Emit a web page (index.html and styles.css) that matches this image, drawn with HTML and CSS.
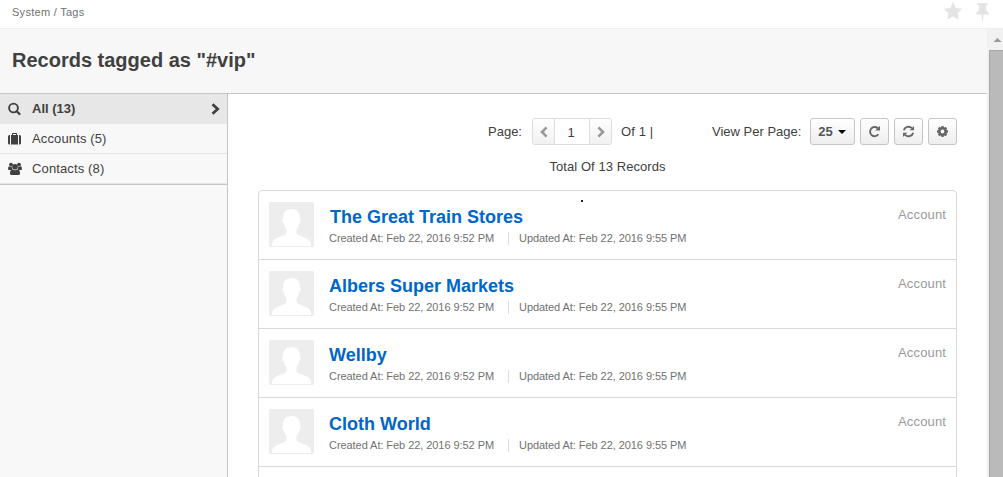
FILE: index.html
```html
<!DOCTYPE html>
<html lang="en">
<head>
<meta charset="utf-8">
<title>Tags</title>
<link rel="stylesheet" href="styles.css">
</head>
<body>
<svg class="defs" width="0" height="0">
  <symbol id="avatar" viewBox="0 0 45 45">
    <rect width="45" height="45" rx="2" fill="#ededed"/>
    <path d="M22.500 7C17 7 13.600 10.300 14.100 16.500c-1.300.5-.9 3.900.7 4.700.4 2.500 1.300 4.500 2.700 6V31C16.500 34.500 5 34.500 3 41v3h39v-3C40 34.500 28.500 34.500 27.500 31v-3.800c1.400-1.500 2.300-3.500 2.700-6 1.600-.8 2-4.200.7-4.700C31.400 10.300 28 7 22.500 7z" fill="#fff"/>
  </symbol>
</svg>
<header class="topbar">
  <nav class="crumbs">System / Tags</nav>
  <div class="topicons">
    <svg width="20" height="19" viewBox="0 0 20 19"><path d="M10 0l2.800 5.900 6.400.8-4.600 4.500 1.200 6.300L10 14.500l-5.800 3 1.200-6.300L.8 6.700l6.400-.8z" fill="#e4e4e4"/></svg>
    <svg width="13" height="19" viewBox="0 0 13 19"><path d="M2 1h9q.8 0 .8 1t-.8 1h-.8v5.500c1.700.8 2.600 2.200 2.600 4H7.500l-.5 6H6l-.5-6H.2c0-1.800.9-3.200 2.600-4V3H2q-.8 0-.8-1T2 1z" fill="#e4e4e4"/></svg>
  </div>
</header>
<div class="below">
  <div class="page">
    <div class="title"><h1>Records tagged as "#vip"</h1></div>
    <div class="columns">
      <aside class="side">
        <ul class="filters">
          <li class="active"><svg width="16" height="14" viewBox="0 0 16 14"><circle cx="5.500" cy="6" r="4.400" fill="none" stroke="#404040" stroke-width="1.900"/><path d="M8.700 9.200l2.800 2.800" stroke="#404040" stroke-width="2.300" stroke-linecap="round"/></svg><span>All (13)</span><svg class="arrow" width="9" height="12" viewBox="0 0 9 12"><path d="M1.500 1.200L6.700 6l-5.200 4.800" fill="none" stroke="#404040" stroke-width="2.700"/></svg></li>
          <li><svg width="16" height="14" viewBox="0 0 16 14"><path d="M0 4.500Q0 3 1.500 3H2v9.500h-.5Q0 12.500 0 11zM11 3h.5Q13 3 13 4.500V11q0 1.500-1.500 1.500H11zM3 3h1V1.800Q4 1 4.800 1h3.400Q9 1 9 1.800V3h1v9.500H3zM5 2v1h3V2z" fill="#404040" fill-rule="evenodd"/></svg><span>Accounts (5)</span></li>
          <li><svg width="16" height="14" viewBox="0 0 16 14"><g fill="#404040"><circle cx="3" cy="2.700" r="1.900"/><circle cx="11" cy="2.700" r="1.900"/><circle cx="7" cy="4.700" r="2.800"/><path d="M0 7.200Q0 4.300 1.200 4.300q1.700 1 2.600.4 0 1.500.9 2.500Q3.500 7 2.800 8H1Q0 8 0 7.200zM14 7.200q0-2.900-1.200-2.900-1.700 1-2.600.4 0 1.500-.9 2.500 1.200-.2 1.900.8H13q1 0 1-.8zM2 11.500q0-4 2.300-4.200Q7 9 9.700 7.300 12 7.500 12 11.500 12 13 10.500 13h-7Q2 13 2 11.500z"/></g></svg><span>Contacts (8)</span></li>
        </ul>
      </aside>
      <main class="content">
        <div class="controls">
          <span class="lbl">Page:</span>
          <div class="pager">
            <button><svg width="8" height="12" viewBox="0 0 8 12"><path d="M6.600 1.300L2 6l4.600 4.700" fill="none" stroke="#999" stroke-width="2.600"/></svg></button>
            <span class="num">1</span>
            <button><svg width="8" height="12" viewBox="0 0 8 12"><path d="M1.400 1.300L6 6l-4.600 4.700" fill="none" stroke="#999" stroke-width="2.600"/></svg></button>
          </div>
          <span class="of">Of 1 |</span>
          <span class="view">View Per Page:</span>
          <button class="btn size"><span>25</span><i class="caret"></i></button>
          <button class="btn"><svg width="13" height="13" viewBox="0 0 13 13"><path d="M10.400 9.300A4.600 4.600 0 1 1 9.800 3.200" fill="none" stroke="#666" stroke-width="1.900"/><path d="M12 .8v4.700H7.300z" fill="#666"/></svg></button>
          <button class="btn"><svg width="13" height="13" viewBox="0 0 13 13"><path d="M1.800 5.300A4.800 4.800 0 0 1 9.900 3.200M11.200 7.700a4.800 4.800 0 0 1-8.100 2.100" fill="none" stroke="#666" stroke-width="1.900"/><path d="M12 1v4.300H7.700zM1 12V7.700h4.300z" fill="#666"/></svg></button>
          <button class="btn"><svg width="13" height="13" viewBox="0 0 13 13"><g fill="none" stroke="#666"><circle cx="6.500" cy="6.500" r="3.200" stroke-width="2.600"/><path d="M6.500 1v2M6.500 10v2M1 6.500h2M10 6.500h2M2.600 2.600L4 4M9 9l1.400 1.400M2.600 10.400L4 9M9 4l1.400-1.400" stroke-width="2.300"/></g></svg></button>
        </div>
        <div class="total">Total Of 13 Records</div>
        <div class="list">
          <span class="dot"></span>
          <article class="row"><svg class="avatar"><use href="#avatar"/></svg><div class="info"><h2 class="first">The Great Train Stores</h2><p><span class="created">Created At: Feb 22, 2016 9:52 PM</span><span>Updated At: Feb 22, 2016 9:55 PM</span></p></div><span class="kind">Account</span></article>
          <article class="row"><svg class="avatar"><use href="#avatar"/></svg><div class="info"><h2>Albers Super Markets</h2><p><span class="created">Created At: Feb 22, 2016 9:52 PM</span><span>Updated At: Feb 22, 2016 9:55 PM</span></p></div><span class="kind">Account</span></article>
          <article class="row"><svg class="avatar"><use href="#avatar"/></svg><div class="info"><h2>Wellby</h2><p><span class="created">Created At: Feb 22, 2016 9:52 PM</span><span>Updated At: Feb 22, 2016 9:55 PM</span></p></div><span class="kind">Account</span></article>
          <article class="row"><svg class="avatar"><use href="#avatar"/></svg><div class="info"><h2>Cloth World</h2><p><span class="created">Created At: Feb 22, 2016 9:52 PM</span><span>Updated At: Feb 22, 2016 9:55 PM</span></p></div><span class="kind">Account</span></article>
        </div>
      </main>
    </div>
  </div>
  <div class="scroll"><svg width="16" height="21" viewBox="0 0 16 21"><path d="M4.500 13L8.500 9l4 4z" fill="#999"/></svg><div class="thumb"></div></div>
</div>
</body>
</html>
```
FILE: styles.css
```css
* { box-sizing: border-box; }
body { margin: 0; height: 477px; overflow: hidden; background: #fff; color: #404040; font: 13px/20px "Liberation Sans", Arial, sans-serif; display: flex; flex-direction: column; }
svg { display: block; flex: none; }
.defs { position: absolute; }
h1, h2, p, ul { margin: 0; padding: 0; }
button { margin: 0; padding: 0; font: inherit; color: inherit; }
.topbar { height: 29px; flex: none; border-bottom: 1px solid #eee; display: flex; justify-content: space-between; padding: 0 14px 0 12px; }
.crumbs { font-size: 11px; line-height: 25px; color: #717171; letter-spacing: .28px; }
.topicons { display: flex; gap: 13px; padding-top: 2px; }
.below { flex: 1; min-height: 0; display: flex; }
.page { width: 987px; flex: none; display: flex; flex-direction: column; }
.title { height: 65px; flex: none; background: #f7f7f7; border-bottom: 1px solid #c5c5c5; padding: 17px 12px 0; }
.title h1 { font-size: 20px; line-height: 28px; font-weight: bold; }
.columns { flex: 1; min-height: 0; display: flex; }
.side { width: 228px; flex: none; background: #f8f8f8; border-right: 1px solid #c5c5c5; }
.filters { list-style: none; border-bottom: 1px solid #c5c5c5; height: 91px; }
.filters li { height: 30px; display: flex; align-items: center; gap: 8px; padding: 0 8px; border-bottom: 1px solid #e5e5e5; letter-spacing: .13px; }
.filters .active { background: #e7e7e7; font-weight: bold; letter-spacing: 0; }
.arrow { margin-left: auto; margin-right: -1px; }
.content { flex: 1; padding: 24px 30px 0; overflow: hidden; }
.controls { height: 27px; display: flex; align-items: center; padding-left: 230px; white-space: nowrap; }
.lbl { width: 44px; }
.lbl, .of, .view { line-height: 28px; padding-top: 1px; }
.pager { width: 80px; height: 27px; display: flex; border: 1px solid #ddd; border-radius: 3px; overflow: hidden; background: #f7f7f7; }
.pager button { width: 21px; border: 0; background: linear-gradient(#fff, #f1f1f1); display: flex; align-items: center; justify-content: center; }
.num { flex: 1; background: #fff; border: solid #ddd; border-width: 0 1px; text-align: center; line-height: 28px; padding-right: 2px; }
.of { margin-left: 9px; width: 91px; letter-spacing: .1px; }
.view { width: 98px; }
.btn { width: 29px; height: 27px; margin-left: 5px; border: 1px solid #c5c5c5; border-radius: 3px; background: linear-gradient(#fff, #eee); display: flex; align-items: center; justify-content: center; }
.size { width: 45px; margin-left: 0; gap: 5px; font-weight: bold; color: #555; }
.size span { margin-left: -1px; }
.caret { border: 4px solid transparent; border-top-color: #000; border-bottom: 0; }
.total { text-align: center; margin-top: 11px; line-height: 22px; letter-spacing: .07px; }
.list { position: relative; margin-top: 12px; border: 1px solid #d9d9d9; border-radius: 4px 4px 0 0; height: 320px; }
.dot { position: absolute; left: 322px; top: 9px; width: 2px; height: 2px; background: #222; }
.row { height: 69px; display: flex; padding: 11px 10px 0; border-bottom: 1px solid #d9d9d9; }
.avatar { width: 45px; height: 45px; }
.info { margin-left: 15px; flex: 1; }
.info h2 { font-size: 18px; line-height: 30px; color: #0066c8; }
.info .first { padding-left: 1px; }
.info p { font-size: 11px; line-height: 13px; color: #717171; display: flex; letter-spacing: -.06px; }
.created { width: 180px; border-right: 1px solid #ddd; margin-right: 10px; white-space: nowrap; }
.kind { color: #999; line-height: 26px; letter-spacing: .14px; }
.scroll { flex: 1; background: #f1f1f1; display: flex; flex-direction: column; padding-left: 2px; }
.thumb { flex: 1; background: #bababa; border: solid #a8a8a8; border-width: 1px 0 0 1px; }
```
